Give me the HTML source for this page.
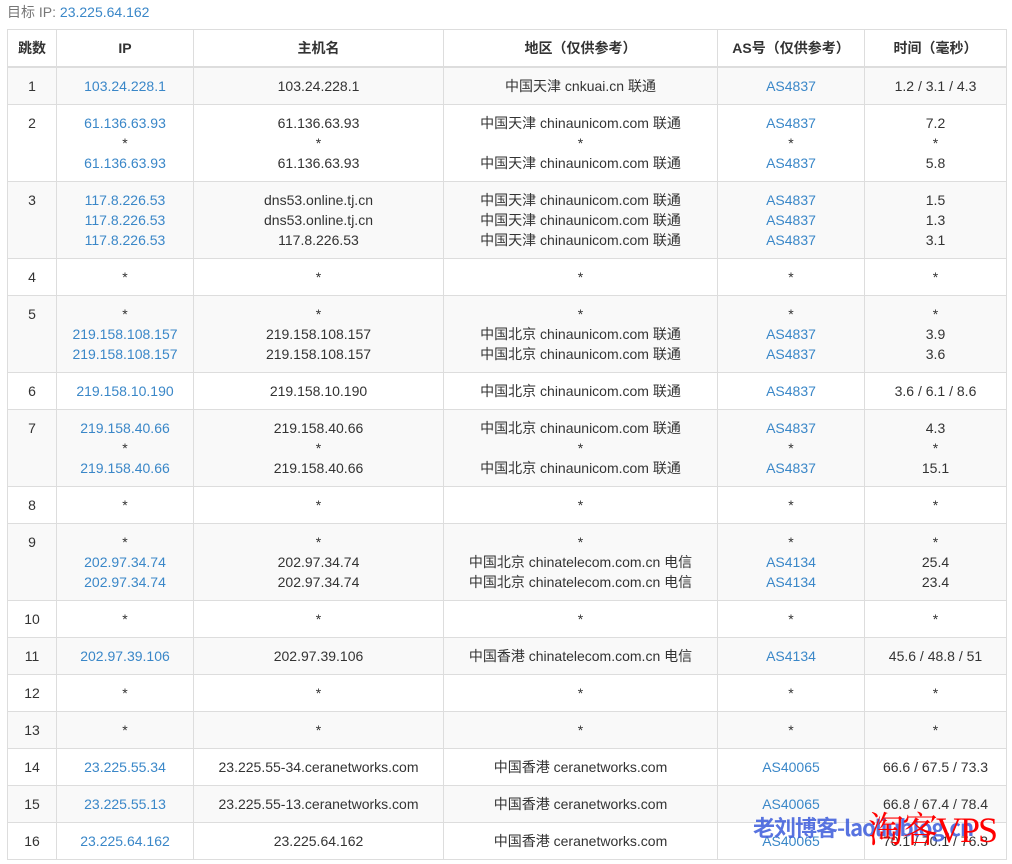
<!DOCTYPE html>
<html><head><meta charset="utf-8"><style>
body{margin:0;background:#fff;font-family:"Liberation Sans","Noto Sans CJK SC",sans-serif;font-size:14px;color:#333;}
.t{position:absolute;left:7px;top:3px;line-height:18px;color:#777;}
.t a{color:#3a87c8;}
table{position:absolute;left:7px;top:29px;width:999px;border-collapse:collapse;table-layout:fixed;}
td,th{border:1px solid #ddd;padding:8px 4px;line-height:20px;text-align:center;vertical-align:top;white-space:nowrap;overflow:hidden;}
th{font-weight:bold;border-bottom:2px solid #ddd;}
tbody tr:nth-child(odd){background:#f9f9f9;}
.b{color:#3a87c8;}
.wm1{position:absolute;left:753px;top:814px;font-size:22px;font-weight:bold;color:#3b5bdb;font-family:"Noto Sans CJK SC",sans-serif;line-height:26px;opacity:.85;letter-spacing:-1px;white-space:nowrap}
.wm2{position:absolute;left:868px;top:808px;font-size:36px;color:#f00;font-family:"Liberation Serif","Noto Serif CJK SC",serif;line-height:44px;white-space:nowrap;letter-spacing:-2px}
</style></head><body>
<div class="t">目标 IP: <a>23.225.64.162</a></div>
<table>
<colgroup><col style="width:49px"><col style="width:137px"><col style="width:250px"><col style="width:274px"><col style="width:147px"><col style="width:142px"></colgroup>
<thead><tr><th>跳数</th><th>IP</th><th>主机名</th><th>地区（仅供参考）</th><th>AS号（仅供参考）</th><th>时间（毫秒）</th></tr></thead>
<tbody>
<tr><td>1</td><td class="b">103.24.228.1</td><td>103.24.228.1</td><td>中国天津 cnkuai.cn 联通</td><td class="b">AS4837</td><td>1.2 / 3.1 / 4.3</td></tr>
<tr><td>2</td><td class="b">61.136.63.93<br><span style="color:#333">*</span><br>61.136.63.93</td><td>61.136.63.93<br>*<br>61.136.63.93</td><td>中国天津 chinaunicom.com 联通<br>*<br>中国天津 chinaunicom.com 联通</td><td class="b">AS4837<br><span style="color:#333">*</span><br>AS4837</td><td>7.2<br>*<br>5.8</td></tr>
<tr><td>3</td><td class="b">117.8.226.53<br>117.8.226.53<br>117.8.226.53</td><td>dns53.online.tj.cn<br>dns53.online.tj.cn<br>117.8.226.53</td><td>中国天津 chinaunicom.com 联通<br>中国天津 chinaunicom.com 联通<br>中国天津 chinaunicom.com 联通</td><td class="b">AS4837<br>AS4837<br>AS4837</td><td>1.5<br>1.3<br>3.1</td></tr>
<tr><td>4</td><td>*</td><td>*</td><td>*</td><td>*</td><td>*</td></tr>
<tr><td>5</td><td class="b"><span style="color:#333">*</span><br>219.158.108.157<br>219.158.108.157</td><td>*<br>219.158.108.157<br>219.158.108.157</td><td>*<br>中国北京 chinaunicom.com 联通<br>中国北京 chinaunicom.com 联通</td><td class="b"><span style="color:#333">*</span><br>AS4837<br>AS4837</td><td>*<br>3.9<br>3.6</td></tr>
<tr><td>6</td><td class="b">219.158.10.190</td><td>219.158.10.190</td><td>中国北京 chinaunicom.com 联通</td><td class="b">AS4837</td><td>3.6 / 6.1 / 8.6</td></tr>
<tr><td>7</td><td class="b">219.158.40.66<br><span style="color:#333">*</span><br>219.158.40.66</td><td>219.158.40.66<br>*<br>219.158.40.66</td><td>中国北京 chinaunicom.com 联通<br>*<br>中国北京 chinaunicom.com 联通</td><td class="b">AS4837<br><span style="color:#333">*</span><br>AS4837</td><td>4.3<br>*<br>15.1</td></tr>
<tr><td>8</td><td>*</td><td>*</td><td>*</td><td>*</td><td>*</td></tr>
<tr><td>9</td><td class="b"><span style="color:#333">*</span><br>202.97.34.74<br>202.97.34.74</td><td>*<br>202.97.34.74<br>202.97.34.74</td><td>*<br>中国北京 chinatelecom.com.cn 电信<br>中国北京 chinatelecom.com.cn 电信</td><td class="b"><span style="color:#333">*</span><br>AS4134<br>AS4134</td><td>*<br>25.4<br>23.4</td></tr>
<tr><td>10</td><td>*</td><td>*</td><td>*</td><td>*</td><td>*</td></tr>
<tr><td>11</td><td class="b">202.97.39.106</td><td>202.97.39.106</td><td>中国香港 chinatelecom.com.cn 电信</td><td class="b">AS4134</td><td>45.6 / 48.8 / 51</td></tr>
<tr><td>12</td><td>*</td><td>*</td><td>*</td><td>*</td><td>*</td></tr>
<tr><td>13</td><td>*</td><td>*</td><td>*</td><td>*</td><td>*</td></tr>
<tr><td>14</td><td class="b">23.225.55.34</td><td>23.225.55-34.ceranetworks.com</td><td>中国香港 ceranetworks.com</td><td class="b">AS40065</td><td>66.6 / 67.5 / 73.3</td></tr>
<tr><td>15</td><td class="b">23.225.55.13</td><td>23.225.55-13.ceranetworks.com</td><td>中国香港 ceranetworks.com</td><td class="b">AS40065</td><td>66.8 / 67.4 / 78.4</td></tr>
<tr><td>16</td><td class="b">23.225.64.162</td><td>23.225.64.162</td><td>中国香港 ceranetworks.com</td><td class="b">AS40065</td><td>70.1 / 70.1 / 76.3</td></tr>
</tbody></table>
<div class="wm1">老刘博客-laoliublog.cn</div>
<div class="wm2">淘客VPS</div>
</body></html>
